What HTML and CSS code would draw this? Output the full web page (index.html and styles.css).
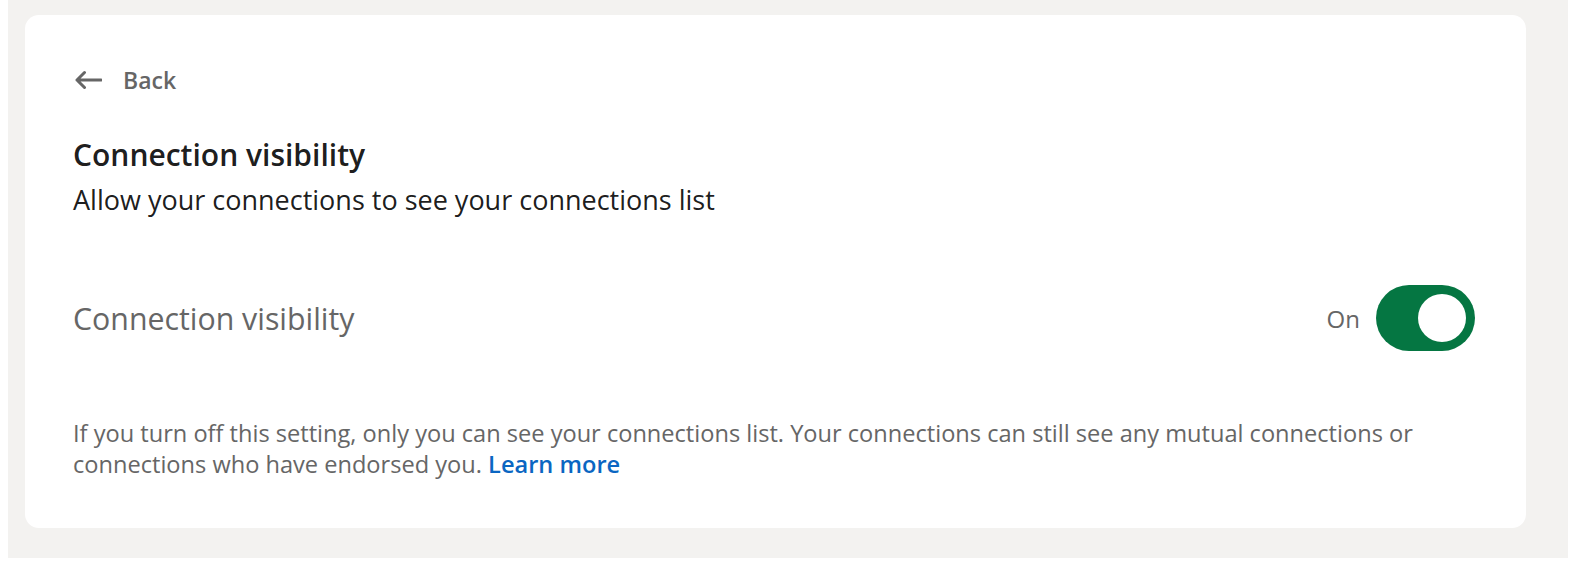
FILE: index.html
```html
<!DOCTYPE html>
<html lang="en">
<head>
<meta charset="utf-8">
<title>Connection visibility</title>
<link rel="stylesheet" href="styles.css">
</head>
<body>
<div class="page">
  <section class="card">
    <a class="back" href="#">
      <svg class="back-icon" width="28" height="20" viewBox="0 0 28 20" aria-hidden="true">
        <path d="M27 10H3M10.5 2.5L3 10l7.5 7.5" fill="none" stroke="#666" stroke-width="3" stroke-linecap="round" stroke-linejoin="round"/>
      </svg>
      <span>Back</span>
    </a>
    <h1 class="title">Connection visibility</h1>
    <p class="subtitle">Allow your connections to see your connections list</p>
    <div class="setting-row">
      <span class="setting-label">Connection visibility</span>
      <div class="toggle-wrap">
        <span class="toggle-state">On</span>
        <span class="toggle" role="switch" aria-checked="true"><span class="knob"></span></span>
      </div>
    </div>
    <p class="note"><span class="note-text">If you turn off this setting, only you can see your connections list. Your connections can still see any mutual connections or connections who have endorsed you.&nbsp;</span><a class="learn" href="#">Learn more</a></p>
  </section>
</div>
</body>
</html>
```

FILE: styles.css
```css
html, body {
  margin: 0;
  padding: 0;
  background: #ffffff;
}
body {
  padding: 0 8px;
  font-family: "Open Sans", "Noto Sans", sans-serif;
}
.page {
  box-sizing: border-box;
  width: 1560px;
  height: 558px;
  background: #f3f2f0;
  padding: 15px 42px 30px 17px;
}
.card {
  box-sizing: border-box;
  height: 513px;
  background: #ffffff;
  border-radius: 14px;
  padding: 51px 51px 0 48px;
}
.back {
  display: flex;
  align-items: center;
  gap: 21px;
  color: #666666;
  text-decoration: none;
  font-size: 23px;
  font-weight: 600;
  height: 28px;
}
.back-icon {
  display: block;
  margin-left: 1px;
}
.title {
  margin: 43px 0 0;
  font-size: 30px;
  font-weight: 600;
  line-height: 36px;
  color: rgba(0, 0, 0, 0.9);
}
.subtitle {
  margin: 9px 0 0;
  font-size: 27px;
  line-height: 36px;
  color: rgba(0, 0, 0, 0.9);
}
.setting-row {
  display: flex;
  align-items: center;
  justify-content: space-between;
  margin-top: 67px;
  height: 66px;
}
.setting-label {
  font-size: 30.3px;
  color: #666666;
}
.toggle-wrap {
  display: flex;
  align-items: center;
  gap: 16px;
}
.toggle-state {
  font-size: 24px;
  color: #666666;
}
.toggle {
  box-sizing: border-box;
  width: 99px;
  height: 66px;
  border-radius: 33px;
  background: #057642;
  display: flex;
  align-items: center;
  justify-content: flex-end;
  padding-right: 9px;
}
.knob {
  width: 48px;
  height: 48px;
  border-radius: 50%;
  background: #ffffff;
}
.note {
  margin: 67px 0 0;
  font-size: 23.6px;
  line-height: 31px;
  color: #666666;
  max-width: 1400px;
}
.learn {
  display: inline-block;
  line-height: 31px;
  color: #0a66c2;
  font-weight: 600;
  text-decoration: none;
}
```
